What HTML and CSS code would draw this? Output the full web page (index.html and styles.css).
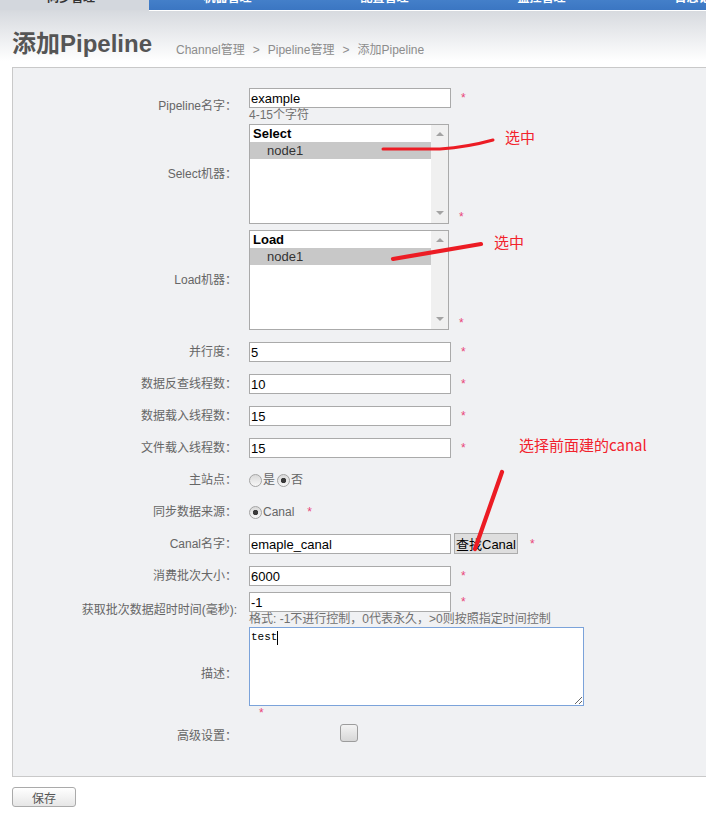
FILE: index.html
```html
<!DOCTYPE html>
<html lang="zh-CN">
<head>
    <meta charset="UTF-8">
    <meta name="viewport" content="width=device-width, initial-scale=1.0">
    <title>添加Pipeline</title>
    <link rel="stylesheet" href="styles.css">
</head>
<body>

    <!-- Top navigation (page is scrolled, only the bottom of the tabs shows) -->
    <div class="topnav">
        <a class="tab tab-current">同步管理</a>
        <a class="tab">机器管理</a>
        <a class="tab">配置管理</a>
        <a class="tab">监控管理</a>
        <a class="tab">日志记录</a>
    </div>

    <!-- Title and breadcrumb -->
    <div class="page-head">
        <h1>添加Pipeline</h1>
        <div class="crumbs">
            <a>Channel管理</a><span class="sep">&gt;</span><a>Pipeline管理</a><span class="sep">&gt;</span><span>添加Pipeline</span>
        </div>
    </div>

    <!-- Pipeline form -->
    <div class="panel">
        <div class="row">
            <label class="label">Pipeline名字：</label>
            <div class="field">
                <div class="line"><input class="text" type="text" value="example"><span class="req">*</span></div>
                <div class="hint">4-15个字符</div>
            </div>
        </div>

        <div class="row row-list">
            <label class="label">Select机器：</label>
            <div class="field field-list">
                <div class="listbox">
                    <div class="list-items">
                        <div class="group">Select</div>
                        <div class="option selected">node1</div>
                    </div>
                    <div class="scrollbar"><span class="arrow-up"></span><span class="arrow-down"></span></div>
                </div>
                <span class="req req-bottom">*</span>
            </div>
        </div>

        <div class="row row-list row-tight">
            <label class="label">Load机器：</label>
            <div class="field field-list">
                <div class="listbox">
                    <div class="list-items">
                        <div class="group">Load</div>
                        <div class="option selected">node1</div>
                    </div>
                    <div class="scrollbar"><span class="arrow-up"></span><span class="arrow-down"></span></div>
                </div>
                <span class="req req-bottom">*</span>
            </div>
        </div>

        <div class="row row-after-list">
            <label class="label">并行度：</label>
            <div class="field line"><input class="text" type="text" value="5"><span class="req">*</span></div>
        </div>

        <div class="row row-gap">
            <label class="label">数据反查线程数：</label>
            <div class="field line"><input class="text" type="text" value="10"><span class="req">*</span></div>
        </div>

        <div class="row row-gap">
            <label class="label">数据载入线程数：</label>
            <div class="field line"><input class="text" type="text" value="15"><span class="req">*</span></div>
        </div>

        <div class="row row-gap">
            <label class="label">文件载入线程数：</label>
            <div class="field line"><input class="text" type="text" value="15"><span class="req">*</span></div>
        </div>

        <div class="row row-gap">
            <label class="label">主站点：</label>
            <div class="field line">
                <input class="radio" type="radio" name="home"><span>是</span>
                <input class="radio radio-next" type="radio" name="home" checked><span>否</span>
            </div>
        </div>

        <div class="row row-gap">
            <label class="label">同步数据来源：</label>
            <div class="field line">
                <input class="radio" type="radio" name="source" checked><span>Canal</span><span class="req req-wide">*</span>
            </div>
        </div>

        <div class="row row-canal">
            <label class="label">Canal名字：</label>
            <div class="field line line-bottom">
                <input class="text" type="text" value="emaple_canal"><button class="find-btn">查找Canal</button><span class="req req-wide2">*</span>
            </div>
        </div>

        <div class="row row-gap">
            <label class="label">消费批次大小：</label>
            <div class="field line"><input class="text" type="text" value="6000"><span class="req">*</span></div>
        </div>

        <div class="row row-timeout">
            <label class="label">获取批次数据超时时间(毫秒):</label>
            <div class="field">
                <div class="line"><input class="text" type="text" value="-1"><span class="req">*</span></div>
                <div class="hint">格式: -1不进行控制，0代表永久，&gt;0则按照指定时间控制</div>
            </div>
        </div>

        <div class="row">
            <label class="label">描述：</label>
            <div class="field">
                <textarea class="desc">test</textarea>
                <span class="req req-below">*</span>
            </div>
        </div>

        <div class="row row-advanced">
            <label class="label">高级设置：</label>
            <div class="field field-top"><input class="check" type="checkbox"></div>
        </div>
    </div>

    <div class="actions">
        <button class="save-btn">保存</button>
    </div>

    <!-- Red hand-drawn notes lying over the screenshot -->
    <div class="marks">
        <svg width="706" height="817" viewBox="0 0 706 817">
            <path d="M383 149 L440 149 Q468 147 493 140" class="stroke thin"/>
            <path d="M393 259 L481 244" class="stroke"/>
            <path d="M502 472 L475 549" class="stroke"/>
        </svg>
        <span class="caret"></span>
        <span class="note note-select">选中</span>
        <span class="note note-load">选中</span>
        <span class="note note-canal">选择前面建的canal</span>
    </div>

</body>
</html>
```

FILE: styles.css
```css
/* General styling */
html, body {
    margin: 0;
    overflow-x: hidden;
}
body {
    position: relative;
    font: 12px/16px "Liberation Sans", "Noto Sans CJK SC", sans-serif;
    color: #666;
    background-color: #fff;
}

/* Top navigation */
.topnav {
    display: flex;
    height: 31px;
    margin-top: -20px;
}
.tab {
    flex: none;
    width: 157px;
    height: 24px;
    padding-top: 6px;
    line-height: 24px;
    text-align: center;
    font-weight: bold;
    color: #fff;
    background: linear-gradient(#5592d8, #3b76c2);
    border-bottom: 1px solid #fff;
}
.tab-current {
    width: 142px;
    padding-right: 7px;
    color: #333;
    background: #d3d7dd;
    border-bottom-color: #d6d9de;
}

/* Title and breadcrumb */
.page-head {
    display: flex;
    align-items: flex-start;
    height: 56px;
    padding-left: 12px;
    background: linear-gradient(#d7dadf, #fff 90%);
}
.page-head h1 {
    margin: 0;
    padding-top: 19px;
    font-size: 24px;
    line-height: 28px;
    color: #555;
}
.crumbs {
    margin-left: 24px;
    padding-top: 31px;
    color: #8c8c8c;
}
.crumbs .sep {
    margin: 0 8px;
}

/* Form panel */
.panel {
    width: 760px;
    margin-left: 12px;
    padding: 20px 0 28px;
    border: 1px solid #c9c9c9;
    background-color: #f0f1f3;
}
.row {
    display: flex;
    align-items: center;
}
.label {
    flex: none;
    width: 224px;
    padding-right: 12px;
    text-align: right;
}
.line {
    display: flex;
    align-items: center;
    height: 20px;
}
.line-bottom {
    align-items: flex-end;
    height: 21px;
}
.hint {
    line-height: 15px;
    color: #707070;
}
.req {
    margin-left: 10px;
    color: #e8457a;
    line-height: 20px;
}
.req-wide { margin-left: 13px; }
.req-wide2 { margin-left: 12px; align-self: center; }

.row-list { padding-bottom: 5px; margin-top: 1px; }
.row-after-list { margin-top: 7px; }
.row-gap { margin-top: 12px; }
.row-canal { margin-top: 11px; }
.row-timeout { margin-top: 6px; }
.row-advanced { margin-top: 4px; height: 24px; }

/* Inputs */
.text {
    box-sizing: border-box;
    width: 202px;
    height: 20px;
    margin: 0;
    padding: 0 1px;
    border: 1px solid #aaa;
    font: 13px "Liberation Sans", "Noto Sans CJK SC", sans-serif;
    color: #000;
    background: #fff;
}
.find-btn {
    box-sizing: border-box;
    height: 21px;
    margin: 0 0 0 3px;
    padding: 0 1px;
    border: 1px solid #acacac;
    background: #dedede;
    font: 13px "Liberation Sans", "Noto Sans CJK SC", sans-serif;
    color: #000;
}
.radio {
    appearance: none;
    box-sizing: border-box;
    width: 13px;
    height: 13px;
    margin: 0 1px 0 0;
    border: 1px solid #a4a4a4;
    border-radius: 50%;
    background: linear-gradient(#d9d9d9, #f7f7f7);
}
.radio:checked {
    background: radial-gradient(circle, #3a3a3a 0 2.4px, transparent 3px), linear-gradient(#d9d9d9, #f7f7f7);
}
.radio-next { margin-left: 2px; }

/* Machine list boxes */
.field-list {
    display: flex;
    align-items: flex-end;
}
.req-bottom { line-height: 14px; }
.listbox {
    display: flex;
    width: 198px;
    height: 98px;
    border: 1px solid #aaa;
    background: #fff;
}
.list-items {
    flex: 1;
    font-size: 13px;
    line-height: 17px;
}
.group {
    padding-left: 3px;
    font-weight: bold;
    color: #000;
}
.option {
    padding-left: 17px;
    color: #333;
}
.option.selected { background: #c8c8c8; }
.scrollbar {
    display: flex;
    flex-direction: column;
    justify-content: space-between;
    align-items: center;
    width: 17px;
    padding: 7px 0 8px;
    box-sizing: border-box;
    background: #f0f0f0;
}
.arrow-up, .arrow-down {
    width: 0;
    height: 0;
    border-left: 4px solid transparent;
    border-right: 4px solid transparent;
}
.arrow-up { border-bottom: 4px solid #a3a3a3; }
.arrow-down { border-top: 4px solid #a3a3a3; }

/* Description */
.desc {
    display: block;
    box-sizing: border-box;
    width: 335px;
    height: 79px;
    margin: 0;
    padding: 3px 1px;
    border: 1px solid #7ba3da;
    font: 11px/13px "Liberation Mono", monospace;
    color: #000;
    background: #fff;
    resize: both;
}
.req-below {
    display: block;
    padding-left: 10px;
    margin-left: 0;
    line-height: 14px;
}

/* Advanced settings */
.field-top { align-self: flex-start; }
.check {
    appearance: none;
    box-sizing: border-box;
    display: block;
    width: 18px;
    height: 18px;
    margin: 0 0 0 91px;
    border: 1px solid #9c9c9c;
    border-radius: 3px;
    background: linear-gradient(#f3f3f3, #d7d7d7);
}

/* Save button */
.actions {
    margin: 10px 0 0 12px;
}
.save-btn {
    box-sizing: border-box;
    width: 64px;
    height: 20px;
    padding: 0;
    border: 1px solid #aaa;
    border-radius: 3px;
    background: linear-gradient(#fff, #e6e6e6);
    font: 12px "Liberation Sans", "Noto Sans CJK SC", sans-serif;
    color: #555;
}

/* Red notes over the page */
.marks {
    position: absolute;
    left: 0;
    top: 0;
    width: 706px;
    height: 817px;
    pointer-events: none;
}
.marks svg {
    position: absolute;
    left: 0;
    top: 0;
}
.stroke {
    fill: none;
    stroke: #ec1c24;
    stroke-width: 4.2;
    stroke-linecap: round;
}
.stroke.thin { stroke-width: 3; }
.caret {
    position: absolute;
    left: 277px;
    top: 631px;
    width: 1px;
    height: 14px;
    background: #000;
}
.note {
    position: absolute;
    font: 15px/15px "Noto Sans CJK SC", sans-serif;
    color: #f2222c;
    white-space: nowrap;
}
.note-select { left: 505px; top: 129px; }
.note-load { left: 494px; top: 234px; }
.note-canal { left: 519px; top: 437px; }
```
